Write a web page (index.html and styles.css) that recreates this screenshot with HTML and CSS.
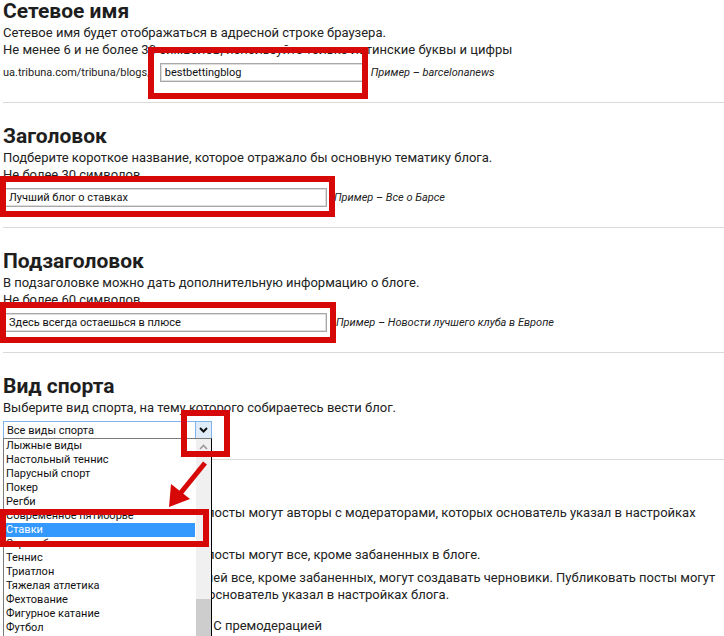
FILE: index.html
```html
<!DOCTYPE html>
<html lang="ru">
	<head>
		<meta charset="UTF-8" />
		<meta name="viewport" content="width=device-width, initial-scale=1.0" />
		<title>Создание блога</title>
		<link rel="stylesheet" href="styles.css">
	</head>
	<body>
		<div class="page">
			<section class="section">
				<h2 class="title">Сетевое имя</h2>
				<p class="hint">Сетевое имя будет отображаться в адресной строке браузера.<br>Не менее 6 и не более 30 символов, используйте только латинские буквы и цифры</p>
				<div class="field">
					<span class="prefix">ua.tribuna.com/tribuna/blogs/</span>
					<input class="input input-url" type="text" value="bestbettingblog">
					<span class="example">Пример – barcelonanews</span>
				</div>
			</section>

			<section class="section">
				<h2 class="title">Заголовок</h2>
				<p class="hint">Подберите короткое название, которое отражало бы основную тематику блога.<br>Не более 30 символов.</p>
				<div class="field">
					<input class="input input-wide" type="text" value="Лучший блог о ставках">
					<span class="example">Пример – Все о Барсе</span>
				</div>
			</section>

			<section class="section">
				<h2 class="title">Подзаголовок</h2>
				<p class="hint">В подзаголовке можно дать дополнительную информацию о блоге.<br>Не более 60 символов.</p>
				<div class="field">
					<input class="input input-wide" type="text" value="Здесь всегда остаешься в плюсе">
					<span class="example example-far">Пример – Новости лучшего клуба в Европе</span>
				</div>
			</section>

			<section class="section">
				<h2 class="title">Вид спорта</h2>
				<p class="hint">Выберите вид спорта, на тему которого собираетесь вести блог.</p>
				<div class="select">
					<span class="select-value">Все виды спорта</span>
					<span class="select-btn">
						<svg width="9" height="6" viewBox="0 0 9 6"><path d="M1 1 L4.5 4.5 L8 1" fill="none" stroke="#111" stroke-width="2"/></svg>
					</span>
					<div class="dropdown">
						<ul class="options">
							<li>Лыжные виды</li>
							<li>Настольный теннис</li>
							<li>Парусный спорт</li>
							<li>Покер</li>
							<li>Регби</li>
							<li>Современное пятиборье</li>
							<li class="active">Ставки</li>
							<li>Стрельба</li>
							<li>Теннис</li>
							<li>Триатлон</li>
							<li>Тяжелая атлетика</li>
							<li>Фехтование</li>
							<li>Фигурное катание</li>
							<li>Футбол</li>
						</ul>
						<div class="scrollbar">
							<span class="scroll-up">
								<svg width="9" height="6" viewBox="0 0 9 6"><path d="M1 5 L4.5 1.5 L8 5" fill="none" stroke="#9a9a9a" stroke-width="1.6"/></svg>
							</span>
							<span class="scroll-track"></span>
							<span class="scroll-thumb"></span>
						</div>
					</div>
				</div>
			</section>

			<section class="section section-last">
				<h2 class="title">Тип блога</h2>
				<p class="option"><span class="option-name">Закрытый</span> Публиковать посты могут авторы с модераторами, которых основатель указал в настройках блога.</p>
				<p class="option option-2"><span class="option-name">Открытый</span> Публиковать посты могут все, кроме забаненных в блоге.</p>
				<p class="option option-3"><span class="option-name">Смешанный</span> Из пользователей все, кроме забаненных, могут создавать черновики. Публиковать посты могут только его модераторы, которых основатель указал в настройках блога.</p>
				<p class="option option-4"><span class="option-name">Модерация</span> С премодерацией</p>
			</section>

			<!-- annotations over the form -->
			<div class="mark mark-url"></div>
			<div class="mark mark-title"></div>
			<div class="mark mark-subtitle"></div>
			<div class="mark mark-arrow"></div>
			<div class="mark mark-option"></div>
			<svg class="pointer" width="724" height="636" viewBox="0 0 724 636">
				<line x1="205" y1="463" x2="179" y2="495" stroke="#d70808" stroke-width="5"/>
				<polygon points="169,507 171,484 190,499" fill="#d70808"/>
			</svg>
		</div>
	</body>
</html>
```

FILE: styles.css
```css
* { margin: 0; padding: 0; box-sizing: border-box; }
html, body { overflow: hidden; }
body {
	font-family: Roboto, 'Noto Sans', sans-serif;
	color: #222;
	background: white;
}
.page {
	position: relative;
	height: 636px;
	padding-left: 3px;
}
.section {
	padding: 22px 0 20px;
	border-bottom: 1px solid #d9d9d9;
}
.section:first-child { padding-top: 0; }
.section-last { padding-top: 20px; border-bottom: none; }
.title {
	font-size: 21px;
	line-height: 22px;
	font-weight: 700;
	color: #1e1e1e;
	margin-bottom: 2px;
}
.hint {
	font-size: 13px;
	line-height: 17px;
}
.field {
	display: flex;
	align-items: center;
	margin-top: 5px;
	font-size: 11px;
}
.prefix { margin-right: 8px; }
.input {
	height: 19px;
	padding: 0 4px;
	border: 1px solid #a8a8a8;
	box-shadow: inset 0 0 0 1px #dedede;
	font-family: Roboto, sans-serif;
	font-size: 11px;
	color: #111;
	background: white;
	outline: none;
}
.input-url { width: 204px; }
.input-wide { width: 323px; margin-left: 1px; }
.example {
	font-style: italic;
	margin-left: 7px;
}
.example-far { margin-left: 9px; }

/* sport select with its open list */
.select {
	position: relative;
	display: flex;
	align-items: center;
	width: 209px;
	height: 18px;
	margin-top: 5px;
	border: 1px solid #7eb4ea;
	font-size: 11px;
	color: #111;
}
.select-value {
	flex: 1;
	padding-left: 3px;
}
.select-btn {
	display: flex;
	align-items: center;
	justify-content: center;
	width: 16px;
	height: 100%;
	background: #e0ecf8;
	border-left: 1px solid #7eb4ea;
}
.dropdown {
	position: absolute;
	top: 16px;
	left: -1px;
	width: 209px;
	height: 215px;
	display: flex;
	background: white;
	border: 1px solid #7a7a7a;
	border-right-color: #000;
	z-index: 2;
}
.options {
	flex: 1;
	list-style: none;
	padding: 0 0 0 1px;
	font-size: 11px;
	line-height: 14px;
	color: #111;
}
.options li { padding-left: 1px; }
.options .active {
	background: #3399ff;
	color: white;
	margin-right: 1px;
}
.scrollbar {
	display: flex;
	flex-direction: column;
	width: 15px;
	background: #f0f0f0;
}
.scroll-up {
	display: flex;
	align-items: center;
	justify-content: center;
	height: 16px;
}
.scroll-track { height: 144px; }
.scroll-thumb {
	flex: 1;
	background: #cdcdcd;
}

.option {
	font-size: 13px;
	line-height: 17px;
}
.option-name {
	display: inline-block;
	width: 118px;
	font-weight: 700;
}
.option-2 { margin-top: 8px; }
.option-3 { margin-top: 6px; }
.option-3 .option-name { width: 110px; }
.option-4 { margin-top: 14px; }
.option-4 .option-name { width: 207px; }

/* red annotation frames */
.mark {
	position: absolute;
	border: 6px solid #d70808;
	z-index: 3;
}
.mark-url { left: 148px; top: 47px; width: 220px; height: 52px; }
.mark-title { left: 0; top: 176px; width: 335px; height: 41px; }
.mark-subtitle { left: 0; top: 302px; width: 336px; height: 41px; }
.mark-arrow { left: 181px; top: 410px; width: 49px; height: 47px; }
.mark-option { left: 0; top: 509px; width: 209px; height: 38px; }
.pointer {
	position: absolute;
	left: 0;
	top: 0;
	z-index: 3;
}
```
